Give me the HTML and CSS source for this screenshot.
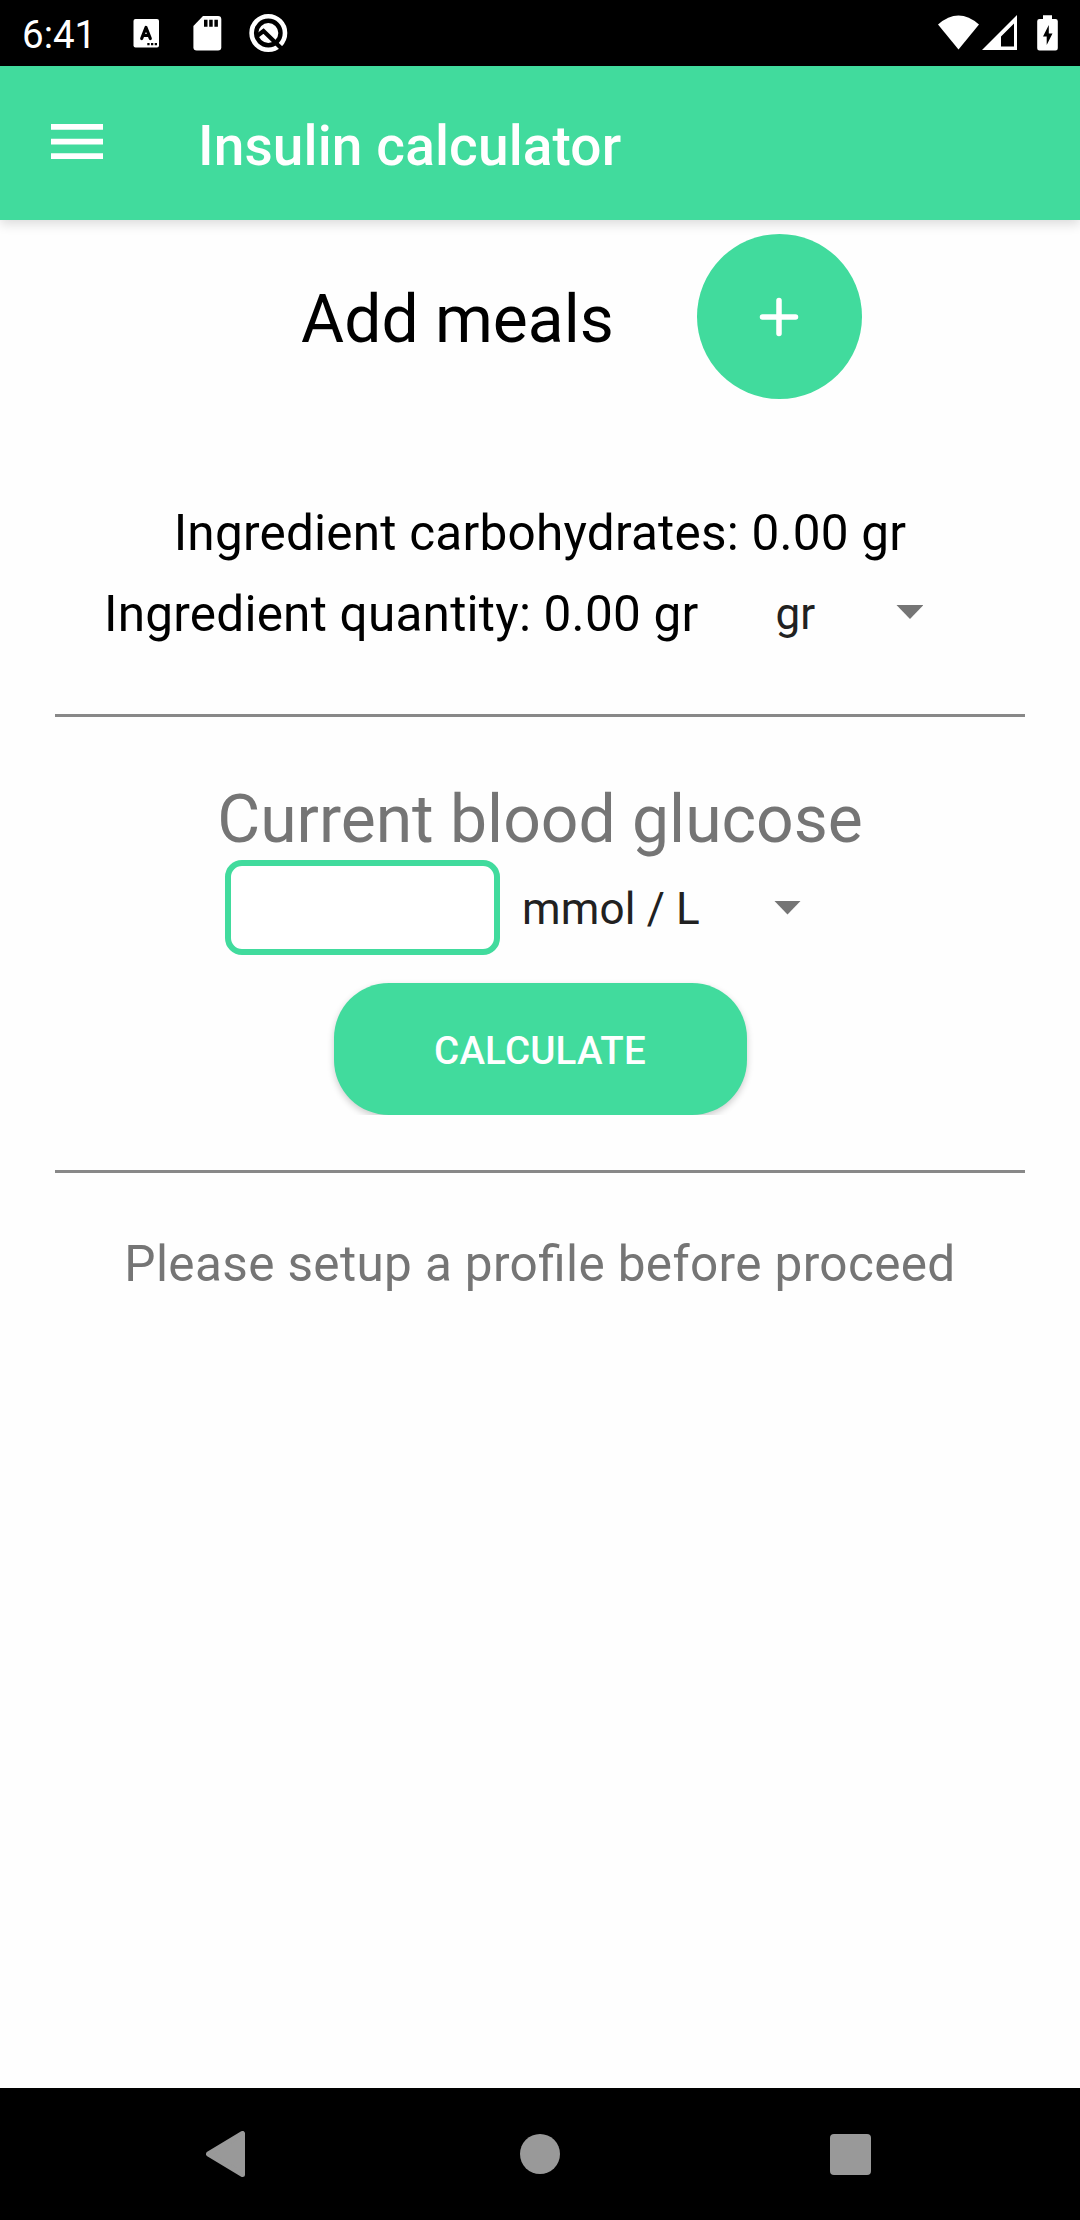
FILE: index.html
```html
<!DOCTYPE html>
<html lang="en">
<head>
<meta charset="utf-8">
<title>Insulin calculator</title>
<link rel="stylesheet" href="styles.css">
</head>
<body>
<div class="status-bar">
  <span class="clock">6:41</span>
  <svg class="notifications" width="160" height="66" viewBox="130 0 160 66">
    <rect x="133.500" y="19" width="25.500" height="28.500" rx="2" fill="#fff"/>
    <path d="M141.700 38.500 146 27.500l4.300 11M143.500 35.500h5" fill="none" stroke="#000" stroke-width="3.200" stroke-linecap="round" stroke-linejoin="round"/>
    <path d="M147.300 43h2.300v2.300h-2.300zM151 43h2.300v2.300H151zM154.700 43h2.300v2.300h-2.300z" fill="#000"/>
    <path d="M203 16h15q3.300 0 3.300 3.300v28q0 3.300-3.300 3.300h-21.300q-3.300 0-3.300-3.300V26z" fill="#fff"/>
    <path d="M204 19.700h3.500v7H204zM209.200 19.700h3.500v7h-3.500zM214.400 19.700h3.500v7h-3.500z" fill="#000"/>
    <circle cx="268.300" cy="33" r="16.700" fill="none" stroke="#fff" stroke-width="4.600"/>
    <circle cx="268.300" cy="33" r="10" fill="#fff"/>
    <path d="m257 36 6.500-5L281 48" fill="none" stroke="#000" stroke-width="4.200"/>
  </svg>
  <svg class="indicators" width="130" height="66" viewBox="930 0 130 66">
    <path d="M938 24.500Q958.500 6.500 979 24.500L958.500 49.500z" fill="#fff"/>
    <path fill-rule="evenodd" d="M1017 15v35h-35zM1014 23.500 1001 36.500V46.500h13z" fill="#fff"/>
    <path d="M1043 15.300h9V19h3.500q2.300 0 2.300 2.300v27q0 2.300-2.300 2.300h-16q-2.300 0-2.300-2.300v-27Q1037.200 19 1039.500 19h3.500z" fill="#fff"/>
    <path d="M1048.800 25 1043 36.500h3.700V45l5.800-11.500h-3.700z" fill="#000"/>
  </svg>
</div>

<header class="app-bar">
  <svg class="menu" width="52" height="36" viewBox="0 0 52 36"><path d="M0 0h52v5.700H0zM0 14.700h52v5.700H0zM0 29.300h52V35H0z" fill="#fff"/></svg>
  <h1 class="title">Insulin calculator</h1>
</header>

<main class="content">
  <div class="meals">
    <span class="heading">Add meals</span>
    <button class="add" aria-label="Add meal"><svg width="40" height="40" viewBox="0 0 40 40"><path d="M20 3.500v33M3.500 20h33" stroke="#fff" stroke-width="5.500" stroke-linecap="round"/></svg></button>
  </div>
  <div class="line carbs">Ingredient carbohydrates: 0.00 gr</div>
  <div class="quantity">
    <span class="line">Ingredient quantity: 0.00 gr</span>
    <span class="unit quantity-unit">gr</span>
    <span class="arrow"></span>
  </div>
  <div class="divider"></div>
  <div class="heading glucose-label">Current blood glucose</div>
  <div class="glucose">
    <input class="field" type="text" aria-label="Current blood glucose">
    <span class="unit glucose-unit">mmol / L</span>
    <span class="arrow"></span>
  </div>
  <div class="action"><button class="calculate">CALCULATE</button></div>
  <div class="divider"></div>
  <div class="line notice">Please setup a profile before proceed</div>
</main>

<nav class="nav-bar">
  <svg width="40" height="46" viewBox="0 0 40 46"><path d="M36.500 2.500v41L2.500 23z" fill="#999" stroke="#999" stroke-width="5" stroke-linejoin="round"/></svg>
  <span class="home"></span>
  <span class="recent"></span>
</nav>
</body>
</html>
```

FILE: styles.css
```css
* { box-sizing: border-box; }

body {
  margin: 0;
  width: 1080px;
  height: 2220px;
  display: flex;
  flex-direction: column;
  overflow: hidden;
  background: #fefefe;
  color: #000;
  font-family: Roboto, sans-serif;
}

svg { display: block; flex: none; }
button { border: 0; padding: 0; font-family: inherit; background: #41db9d; color: #fff; }

.status-bar {
  flex: none;
  height: 66px;
  display: flex;
  background: #000;
  color: #fff;
}
.clock { width: 130px; padding-left: 22px; font-size: 38.5px; line-height: 69px; }
.indicators { margin-left: auto; margin-right: 20px; }

.app-bar {
  flex: none;
  height: 154px;
  display: flex;
  align-items: flex-start;
  background: #41db9d;
  color: #fff;
  box-shadow: 0 4px 11px rgba(0, 0, 0, 0.14);
}
.menu { margin: 58px 0 0 51px; }
.title { margin: 0 0 0 95px; font-size: 55px; font-weight: 500; line-height: 160px; letter-spacing: 0.12px; white-space: nowrap; }

.content { flex: 1; display: flex; flex-direction: column; }

.meals { display: flex; justify-content: center; align-items: center; gap: 83px; height: 165px; margin-top: 14px; padding-left: 83px; }
.heading { font-size: 66px; line-height: 78px; white-space: nowrap; }
.add { width: 165px; height: 165px; display: grid; place-items: center; border-radius: 50%; }
.meals .heading { padding-top: 7px; }

.line { font-size: 49.5px; line-height: 58px; letter-spacing: 0.22px; white-space: nowrap; }
.carbs { margin-top: 105px; text-align: center; }
.quantity { display: flex; align-items: center; height: 66px; margin-top: 19px; padding-left: 104px; }
.unit { color: #212121; font-size: 44px; line-height: 52px; letter-spacing: 0.15px; }
.quantity-unit { width: 121px; margin-left: 77px; }
.arrow { width: 27px; height: 14px; background: #757575; clip-path: polygon(0 0, 100% 0, 50% 100%); }
.quantity .arrow { margin-bottom: 4px; }

.divider { height: 3px; margin: 0 55px; background: #888; }
.quantity + .divider { margin-top: 67px; }

.glucose-label { margin: 64px 0 1px; text-align: center; color: #757575; }
.glucose { display: flex; align-items: center; height: 95px; padding-left: 225px; }
.field { width: 275px; height: 95px; padding: 0 20px; border: 6px solid #41db9d; border-radius: 17px; background: #fff; font: 44px Roboto, sans-serif; outline: none; }
.glucose-unit { width: 252px; margin-left: 22px; padding-top: 2px; }

.action { height: 160px; padding-top: 28px; display: flex; justify-content: center; overflow: hidden; }
.calculate { width: 413px; height: 132px; padding-top: 2px; border-radius: 55px; font-size: 38.5px; font-weight: 500; letter-spacing: 0.2px; box-shadow: 0 3px 7px rgba(0, 0, 0, 0.2); }
.action + .divider { margin-top: 55px; }
.notice { margin-top: 62px; text-align: center; letter-spacing: 0.36px; font-feature-settings: "liga" 1; color: #757575; }

.nav-bar { flex: none; height: 132px; display: flex; align-items: center; padding-left: 206px; background: #000; }
.home { width: 40px; height: 40px; margin-left: 274px; border-radius: 50%; background: #999; }
.recent { width: 41px; height: 41px; margin-left: 270px; border-radius: 4px; background: #999; }
```
